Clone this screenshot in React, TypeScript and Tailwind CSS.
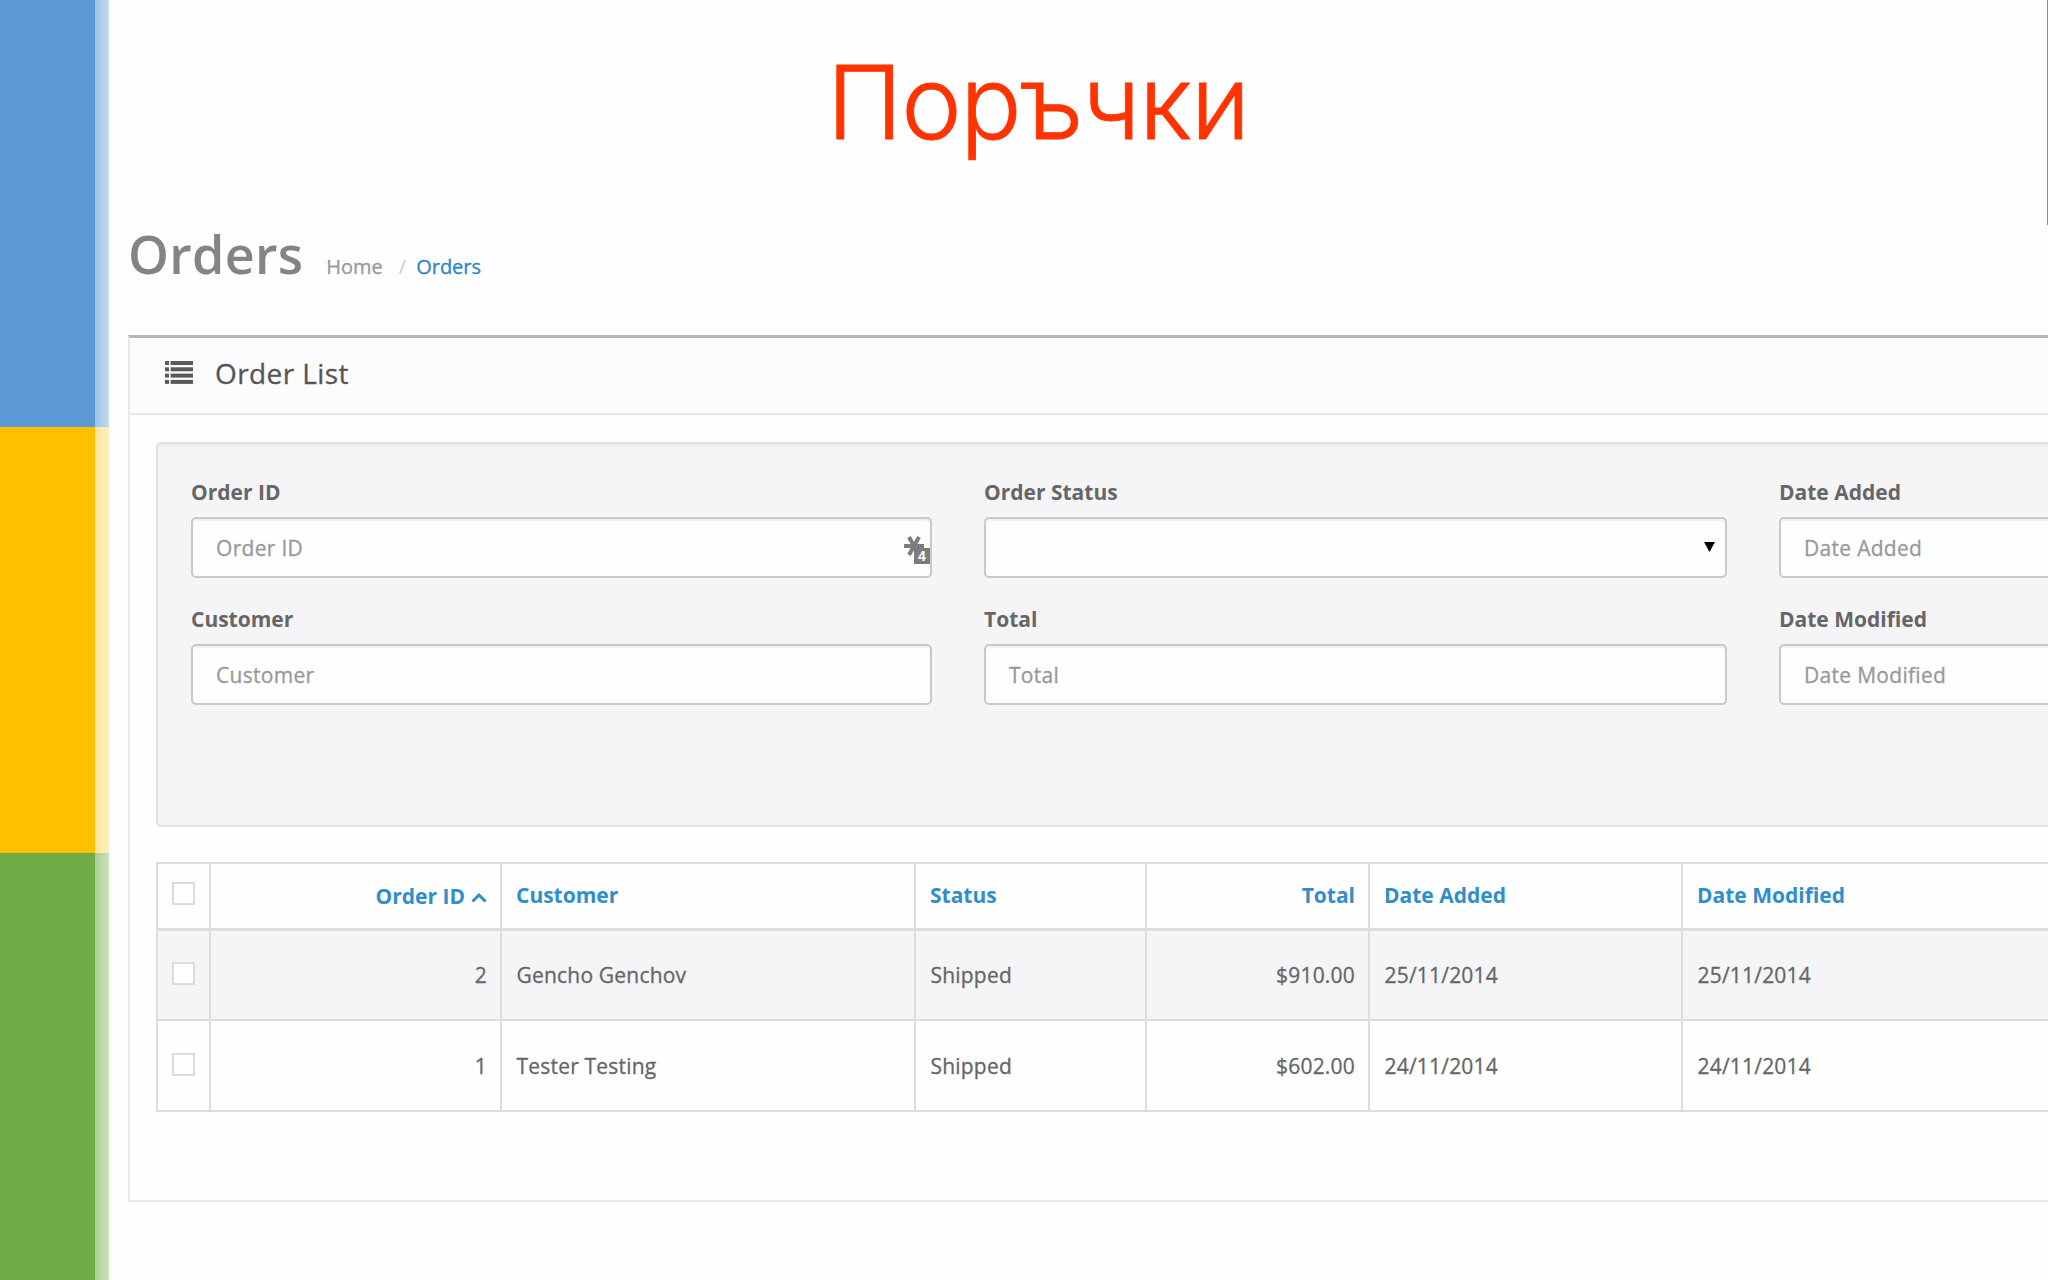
import { ReactNode } from 'react';

interface Order {
  id: number;
  customer: string;
  status: string;
  total: string;
  added: string;
  modified: string;
}

const orders: Order[] = [
  { id: 2, customer: 'Gencho Genchov', status: 'Shipped', total: '$910.00', added: '25/11/2014', modified: '25/11/2014' },
  { id: 1, customer: 'Tester Testing', status: 'Shipped', total: '$602.00', added: '24/11/2014', modified: '24/11/2014' },
];

function ListIcon() {
  return (
    <svg width="28" height="23" viewBox="0 0 28 23" fill="#5a5a5a">
      {[0, 6.3, 12.6, 18.9].map((y) => (
        <g key={y}>
          <rect x="0" y={y} width="4" height="4" />
          <rect x="5.6" y={y} width="22.4" height="4" />
        </g>
      ))}
    </svg>
  );
}

// Marker that the password manager puts in the first input
function FillBadge() {
  return (
    <span className="absolute -right-px top-[17px] h-[29px] w-[27px]">
      <svg width="20" height="20" viewBox="0 0 20 20" stroke="#7d7d7d" strokeWidth="4">
        <path d="M0 10H20M5 1L15 19M15 1L5 19" fill="none" />
      </svg>
      <span className="absolute right-[1px] top-[12px] flex h-[16px] w-[16px] items-center justify-center bg-[#7d7d7d] font-['Liberation_Sans',sans-serif] text-[14px] font-bold leading-none text-white">
        4
      </span>
    </span>
  );
}

function Field({ label, placeholder, children }: { label: string; placeholder?: string; children?: ReactNode }) {
  return (
    <div>
      <label className="block h-[38px] pt-px text-[21px] font-bold leading-6 text-[#666]">{label}</label>
      <div className="relative flex h-[61px] items-center rounded-[5px] border-2 border-[#c9c8cb] bg-[#fefefe] pl-[23px] shadow-[inset_0_2px_2px_rgba(0,0,0,0.06)]">
        {placeholder && (
          <span className="pt-[2px] tracking-[0.3px] text-[#999] [-webkit-text-stroke:0.3px_#999]">{placeholder}</span>
        )}
        {children}
      </div>
    </div>
  );
}

function Checkbox() {
  return <span className="relative -top-px ml-[14px] block h-[23px] w-[23px] border-2 border-[#dcdbde] bg-white" />;
}

function HeadCell({ children, right }: { children: ReactNode; right?: boolean }) {
  return (
    <th className={`border-2 border-b-[3px] border-[#dddce0] font-bold text-[#2f8ecb] ${right ? 'pr-[13px] text-right' : 'pl-[14px] text-left'}`}>
      {children}
    </th>
  );
}

function Cell({ children, right }: { children: ReactNode; right?: boolean }) {
  return (
    <td className={`border-2 border-[#dddce0] pt-[2px] tracking-[0.2px] [-webkit-text-stroke:0.3px_#666] ${right ? 'pr-[13px] text-right' : 'pl-[14.5px] text-left'}`}>
      {children}
    </td>
  );
}

export default function App() {
  return (
    <div className="relative flex h-[1280px] w-[2048px] overflow-hidden bg-[#fefefe] font-['Open_Sans',sans-serif] text-[21px] text-[#666]">
      {/* Colour strip */}
      <div className="flex w-[109px] shrink-0 flex-col">
        <div className="flex h-[427px] bg-[#5b9ad4]">
          <div className="ml-[95px] w-[14px] bg-gradient-to-r from-white/40 to-white/65" />
        </div>
        <div className="flex h-[426px] bg-[#ffc000]">
          <div className="ml-[95px] w-[14px] bg-gradient-to-r from-white/60 to-white/75" />
        </div>
        <div className="flex h-[427px] bg-[#70ad47]">
          <div className="ml-[95px] w-[14px] bg-gradient-to-r from-white/40 to-white/65" />
        </div>
      </div>

      <div className="w-[2200px] shrink-0 pl-[19px]">
        <h1 className="flex h-[204px] items-center pl-[699px] font-['Inter',sans-serif] text-[102px] font-light leading-none tracking-[-1.3px] text-[#ff3300] [-webkit-text-stroke:0.8px_#ff3300]">
          Поръчки
        </h1>

        {/* Page header */}
        <div className="flex h-[131px] items-baseline pt-[14px]">
          <h2 className="text-[52px] font-semibold leading-[72px] tracking-[0.3px] text-[#848484]">Orders</h2>
          <span className="ml-[23px] text-[20px] text-[#999] [-webkit-text-stroke:0.3px_#999]">Home</span>
          <span className="ml-[16px] text-[20px] text-[#ccc]">/</span>
          <span className="ml-[10px] text-[20px] text-[#2a85cb] [-webkit-text-stroke:0.3px_#2a85cb]">Orders</span>
        </div>

        {/* Order list panel */}
        <div className="h-[867px] border-2 border-t-[3px] border-[#e8e7eb] border-t-[#b6b5b8]">
          <div className="flex h-[77px] items-center border-b-2 border-[#e8e7eb] bg-[#fcfbfe] pb-[6px] pl-[35px]">
            <ListIcon />
            <h3 className="ml-[22px] text-[28px] leading-none tracking-[0.4px] text-[#555] [-webkit-text-stroke:0.3px_#555]">
              Order List
            </h3>
          </div>

          <div className="pl-[26px] pt-[27px]">
            <div className="h-[385px] rounded-[5px] border-2 border-[#e3e2e6] bg-[#f5f4f7] pl-[33px] pt-[35px] shadow-[inset_0_2px_2px_rgba(0,0,0,0.04)]">
              <div className="grid grid-cols-[741px_743px_741px] gap-x-[52px] gap-y-[28px]">
                <Field label="Order ID" placeholder="Order ID">
                  <FillBadge />
                </Field>
                <Field label="Order Status">
                  <svg className="mb-[2px] ml-auto mr-[10px]" width="11" height="10" viewBox="0 0 11 10">
                    <path d="M0 0H11L5.5 10Z" fill="#000" />
                  </svg>
                </Field>
                <Field label="Date Added" placeholder="Date Added" />
                <Field label="Customer" placeholder="Customer" />
                <Field label="Total" placeholder="Total" />
                <Field label="Date Modified" placeholder="Date Modified" />
              </div>
            </div>

            <table className="mt-[35px] w-[2000px] table-fixed border-collapse">
              <colgroup>
                <col className="w-[53px]" />
                <col className="w-[291px]" />
                <col className="w-[414px]" />
                <col className="w-[231px]" />
                <col className="w-[223px]" />
                <col className="w-[313px]" />
                <col />
              </colgroup>
              <thead>
                <tr className="h-[66px]">
                  <th className="border-2 border-b-[3px] border-[#dddce0] pb-[3px]"><Checkbox /></th>
                  <HeadCell right>
                    <span className="inline-flex items-center pt-[2px]">
                      Order ID
                      <svg className="ml-[6px] mt-[2px]" width="16" height="10" viewBox="0 0 16 10" fill="none">
                        <path d="M1.5 8.5L8 2L14.5 8.5" stroke="#2f8ecb" strokeWidth="3" />
                      </svg>
                    </span>
                  </HeadCell>
                  <HeadCell>Customer</HeadCell>
                  <HeadCell>Status</HeadCell>
                  <HeadCell right>Total</HeadCell>
                  <HeadCell>Date Added</HeadCell>
                  <HeadCell>Date Modified</HeadCell>
                </tr>
              </thead>
              <tbody>
                {orders.map((order) => (
                  <tr key={order.id} className="h-[91px] odd:bg-[#f5f4f7]">
                    <td className="border-2 border-[#dddce0]"><Checkbox /></td>
                    <Cell right>{order.id}</Cell>
                    <Cell>{order.customer}</Cell>
                    <Cell>{order.status}</Cell>
                    <Cell right>{order.total}</Cell>
                    <Cell>{order.added}</Cell>
                    <Cell>{order.modified}</Cell>
                  </tr>
                ))}
              </tbody>
            </table>
          </div>
        </div>
      </div>

      <div className="absolute right-0 top-0 h-[225px] w-px bg-[#a68a92]" />
    </div>
  );
}
